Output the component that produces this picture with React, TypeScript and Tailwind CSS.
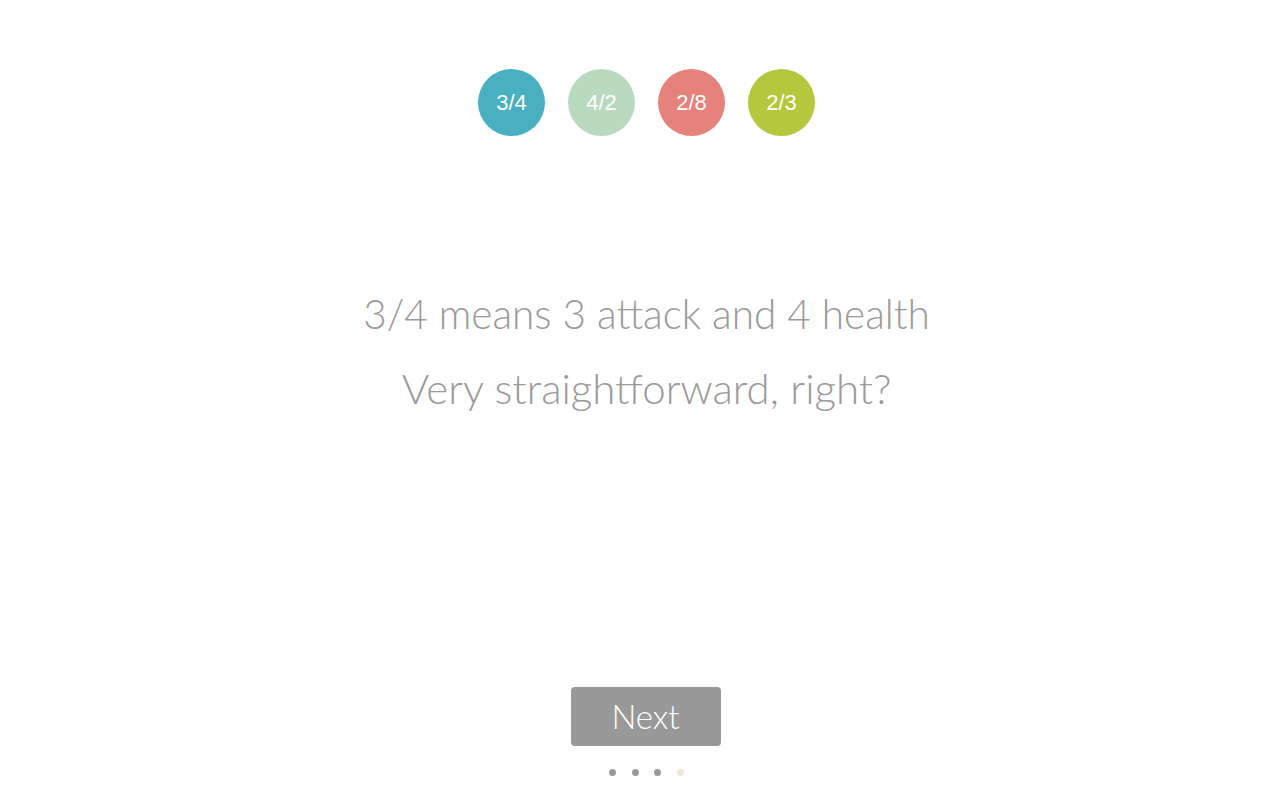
export default function App() {
  const circles = [
    { t: "3/4", c: "bg-[#49b0c1]" },
    { t: "4/2", c: "bg-[#badac0]" },
    { t: "2/8", c: "bg-[#e4827b]" },
    { t: "2/3", c: "bg-[#b5c73c]" },
  ];
  return (
    <div className="w-[1280px] h-[800px] bg-white flex flex-col items-center overflow-hidden pl-[13px]" style={{ fontFamily: "Lato, sans-serif" }}>
      <div className="flex gap-[23px] mt-[69px]">
        {circles.map((x) => (
          <div
            key={x.t}
            className={`w-[67px] h-[67px] rounded-full ${x.c} flex items-center justify-center text-white text-[22px]`}
            style={{ fontFamily: "'Liberation Sans', Arial, sans-serif" }}
          >
            {x.t}
          </div>
        ))}
      </div>
      <div className="mt-[140px] flex flex-col items-center text-[#9a9a9a] font-light leading-[75px]">
        <div className="text-[40.5px]">3/4 means 3 attack and 4 health</div>
        <div className="text-[42px]">Very straightforward, right?</div>
      </div>
      <div className="flex-1" />
      <button className="w-[150px] h-[59px] -ml-[2px] bg-[#999999] rounded-[4px] text-white font-light text-[33px] flex items-center justify-center">
        Next
      </button>
      <div className="flex gap-[15.5px] mt-[23px] mb-[24px]">
        <div className="w-[7px] h-[7px] rounded-full bg-[#999999]" />
        <div className="w-[7px] h-[7px] rounded-full bg-[#999999]" />
        <div className="w-[7px] h-[7px] rounded-full bg-[#999999]" />
        <div className="w-[7px] h-[7px] rounded-full bg-[#ebe8d8]" />
      </div>
    </div>
  );
}
